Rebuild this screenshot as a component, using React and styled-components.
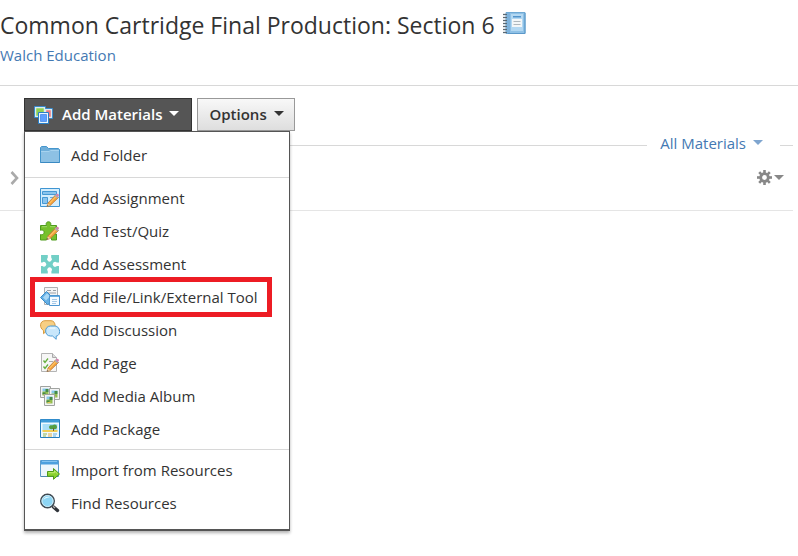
import React, { useState } from "react";
import styled, { createGlobalStyle } from "styled-components";

const GlobalStyle = createGlobalStyle`
    * {
        box-sizing: border-box;
    }
    body {
        min-height: 100vh;
        margin: 0;
        background-color: #ffffff;
        color: #333333;
        font-family: "Open Sans", sans-serif;
        font-size: 15px;
    }
    button {
        font-family: inherit;
        cursor: pointer;
    }
`;

const Header = styled.header`
    padding: 8px 0 19px;
    border-bottom: 1px solid #d8d8d8;
`;

const Title = styled.h1`
    display: flex;
    align-items: center;
    gap: 8px;
    margin: 0;
    font-size: 23px;
    font-weight: 400;
    line-height: 34px;
    white-space: nowrap;

    svg {
        margin-bottom: 4px;
    }
`;

const SchoolLink = styled.a`
    display: block;
    width: fit-content;
    margin-top: 2px;
    color: #4479b3;
    line-height: 22px;
    text-decoration: none;
`;

const Toolbar = styled.div`
    display: flex;
    gap: 5px;
    padding: 12px 24px 0;
`;

const Dropdown = styled.div`
    position: relative;
`;

const ToolbarButton = styled.button`
    display: flex;
    align-items: center;
    height: 33px;
    padding: ${(props) => (props.$dark ? "0 12px 2px 9px" : "0 10px 2px 11px")};
    border: 1px solid ${(props) => (props.$dark ? "#333333" : "#999999")};
    background: ${(props) =>
        props.$dark ? "#555555" : "linear-gradient(#f8f8f8, #dedede)"};
    color: ${(props) => (props.$dark ? "#ffffff" : "#333333")};
    font-size: 15px;
    font-weight: 600;
    white-space: nowrap;

    svg {
        margin: 2px 8px 0 0;
    }
`;

const Caret = styled.span`
    margin-left: 7px;
    border-top: 5px solid currentColor;
    border-right: 5px solid transparent;
    border-left: 5px solid transparent;
`;

const Menu = styled.div`
    position: absolute;
    top: 100%;
    left: 0;
    z-index: 1;
    width: 266px;
    padding: 3px 0 5px;
    border: 1px solid #555555;
    border-bottom-width: 2px;
    background-color: #ffffff;
    box-shadow: 0 2px 3px rgba(0, 0, 0, 0.3);
`;

const MenuGroup = styled.ul`
    margin: 0;
    padding: 4px 0;
    list-style: none;

    &:first-child {
        padding-bottom: 5px;
    }
    &:nth-child(2) {
        padding-bottom: 3px;
    }
    & + & {
        border-top: 1px solid #d8d8d8;
    }
`;

const MenuItem = styled.li`
    position: relative;

    &::after {
        content: "";
        display: ${(props) => (props.$marked ? "block" : "none")};
        position: absolute;
        inset: -4px 17px -3px 5px;
        border: 5px solid #ed1c24;
        pointer-events: none;
    }
`;

const MenuButton = styled.button`
    display: flex;
    align-items: center;
    gap: 11px;
    width: 100%;
    height: 33px;
    padding: 0 15px 1px;
    border: 0;
    background-color: transparent;
    color: #333333;
    font-size: 15px;
    white-space: nowrap;
`;

const FilterBar = styled.div`
    display: flex;
    align-items: center;
    gap: 13px;
    height: 28px;
    padding: 0 5px 0 24px;
`;

const Line = styled.div`
    flex: ${(props) => (props.$short ? "0 0 13px" : "1")};
    height: 1px;
    background-color: #d8d8d8;
`;

const FilterButton = styled.button`
    display: flex;
    align-items: center;
    padding: 0 4px 4px 0;
    border: 0;
    background-color: transparent;
    color: #4479b3;
    font-size: 15px;

    ${Caret} {
        margin-bottom: 2px;
        color: #7fa5cf;
    }
`;

const MaterialRow = styled.div`
    display: flex;
    align-items: flex-start;
    justify-content: space-between;
    margin-right: 5px;
    padding: 11px 9px 25px 10px;
    border-bottom: 1px solid #e5e5e5;
`;

const IconButton = styled.button`
    display: flex;
    align-items: center;
    height: 15px;
    padding: 0;
    border: 0;
    background-color: transparent;
    color: #888888;

    ${Caret} {
        margin-left: 2px;
    }
`;

const Svg = ({ children }) => (
    <svg width="20" height="20" viewBox="0 0 20 20" fill="none" aria-hidden="true">
        {children}
    </svg>
);

const Pencil = () => (
    <g>
        <path d="M8 15 15.5 7l3 2.5-8.3 8L7 18.6z" fill="#f6a43c" stroke="#b9763a" strokeWidth=".8" />
        <path d="m9.5 15.2 6.5-6.8" stroke="#ffd27a" strokeWidth="1" />
        <path d="m7.8 15.4 2.7 1.8L7 18.6z" fill="#efd3a6" />
        <path d="m7.5 17 1 1-1.6.6z" fill="#444" />
        <path d="m14.6 7.8 1.2-1.2 2.8 2.4-1.4 1.3z" fill="#a9adb5" />
        <path d="m15.8 6.6 1-.8c1-.7 2.8.9 2 2l-1 1.2z" fill="#d67fae" />
    </g>
);

const NotebookIcon = () => (
    <svg width="23" height="23" viewBox="0 0 23 23" fill="none" aria-hidden="true">
        <path d="M3 .5h19v21H3z" fill="#8fc1e6" stroke="#6fa9d4" />
        <path d="M4 1h3v20H4z" fill="#7db2dc" />
        <path d="M22 1v20.5H5" stroke="#5b98c9" />
        <path d="M8 2h12v17H8z" fill="#b3d8f2" />
        <path d="M10 4h8v1.5h-8z" fill="#5294cb" />
        <path d="M9 7h10v8H9z" fill="#f4f7f8" />
        <path d="M10.5 9.5h7M10.5 12.5h7" stroke="#b0b8bd" />
        {[2, 5, 8, 11, 14, 17, 20].map((y) => (
            <path key={y} d={`M0 ${y}.5h4`} stroke="#596873" strokeWidth="1.3" />
        ))}
    </svg>
);

const MaterialsIcon = () => (
    <Svg>
        <path d="M1.5 2.5h9v9h-9z" fill="#8ed052" stroke="#d9edf3" strokeWidth="1.5" />
        <path d="M.5 1.5h11v11H.5z" stroke="#3a8acb" />
        <path d="M11.5 4.5h6v8h-6z" fill="#ed777e" stroke="#ddecf3" strokeWidth="1.5" />
        <path d="M11.5 3.5h7v10h-2" stroke="#3a8acb" />
        <path d="M4.5 7.5h10v11h-10z" fill="#eaf6fc" stroke="#287fc9" />
        <path d="M6.5 9.5h6v7h-6z" fill="#5d9fff" stroke="#5a97ec" />
    </Svg>
);

const FolderIcon = () => (
    <Svg>
        <path d="M.5 17.5v-15l1-1h5l2 2h10l1 1v13z" fill="#6faed9" stroke="#4596cd" />
        <path d="M1 6.5h8l2-1h8v12H1z" fill="#8dc1e4" />
        <path d="M1 6.5h8l1.5-1H19" stroke="#a7d3ef" />
        <path d="M.5 17.5h19" stroke="#3a89c2" />
    </Svg>
);

const AssignmentIcon = () => (
    <Svg>
        <path d="M.5.5h19v18H.5z" fill="#d5edfc" stroke="#3f95d2" />
        <path d="M2.5 3.5h14v3h-14z" fill="#8bc4ed" stroke="#4799d4" />
        <path d="M2.5 9.5h5v6h-5z" fill="#8bc4ed" stroke="#4799d4" />
        <path d="M10 9.5h5" stroke="#69aede" />
        <Pencil />
    </Svg>
);

const QuizIcon = () => (
    <Svg>
        <path
            d="M.5 4.5h6C4.4-.5 12.6-.5 10.5 4.5h6v4.3c-4.6-1-4.6 5 0 4.2v6h-5c.8-3.5-5.2-4-5 0h-6v-5.5c4.5 1.5 5-5.8 0-4.2z"
            fill="#76c12c"
            stroke="#4e9b1d"
        />
        <path d="M2 5.7h5M10 5.7h5" stroke="#a0d968" />
        <Pencil />
    </Svg>
);

const AssessmentIcon = () => (
    <Svg>
        <path
            d="M1 1h6.8v2.4a2.4 2.4 0 1 0 3.4 0V1H19v7.6h-2.2a2.4 2.4 0 1 0 0 3.4H19v7.5h-7.6v-2.2a2.4 2.4 0 1 0-3.6 0v2.2H1V12h1.4a2.3 2.3 0 1 0 0-3.4H1z"
            fill="#72cfc6"
        />
    </Svg>
);

const FileLinkIcon = () => (
    <Svg>
        <path d="M4.5.5h13v17h-13z" fill="#f5f5f5" stroke="#adb0b3" />
        <path d="M7 3.5h4M13 3.5h3M7 6h9" stroke="#9aa0a6" />
        <path d="M.5 10.5 6.5 4.5l5 5v6l-4 2z" fill="#65afe4" stroke="#388cca" />
        <path d="m3 10.5 4-4.2 3 3-4 4.3z" fill="#a9d8f5" />
        <path d="M9.5 8.5h10v10h-10z" fill="#f6fbff" stroke="#4d96d1" />
        <path d="M10 9.5h9" stroke="#69aee1" strokeWidth="1" />
        <path d="M12 12.5h5M12 14.5h5M12 16.5h4" stroke="#a5c8e6" />
    </Svg>
);

const DiscussionIcon = () => (
    <Svg>
        <path
            d="M5 .7h6c5.5 0 5.5 10 0 10H7l-3.5 3v-3.2C-.8 8-.5.7 5 .7z"
            fill="#f7cf83"
            stroke="#d99b3f"
        />
        <path
            d="M10.5 6h4c6.5 0 6.5 10 1.7 10v3.3L12.5 16h-2c-6.5 0-6.5-10 0-10z"
            fill="#c8e7fb"
            stroke="#4c9bd4"
        />
        <path d="M9.5 8.2h6" stroke="#e4f5ff" strokeWidth="2" />
    </Svg>
);

const PageIcon = () => (
    <Svg>
        <path d="M1.5.5h11l4 4v14h-15z" fill="#f6f6f6" stroke="#b4b4b4" />
        <path d="M12.5.5v4h4" fill="#ddd" stroke="#aaa" />
        <path d="m3.5 7.5 1.5 2 3-4M3.5 13.5l1.5 2 3-4" stroke="#65ae3c" strokeWidth="1.3" />
        <path d="M9 8.5h4" stroke="#aaa" />
        <Pencil />
    </Svg>
);

const AlbumIcon = () => (
    <Svg>
        {[
            [0.5, 0.5],
            [9.5, 2.5],
            [4.5, 8.5],
        ].map(([x, y]) => (
            <g key={x} transform={`translate(${x} ${y})`}>
                <path d="M0 0h10v11H0z" fill="#f4f4f4" stroke="#a0a3a0" />
                <path d="M2 2h6v3H2z" fill="#86c9ed" />
                <path d="M2 5h6v4H2z" fill="#91bd50" />
                <path d="M5 2.5h3v3H5zM2 6h3v2H2z" fill="#468b44" />
                <path d="M3 8h3" stroke="#e6c75b" />
            </g>
        ))}
    </Svg>
);

const PackageIcon = () => (
    <Svg>
        <path d="M.5.5h19v18H.5z" fill="#eef9ff" stroke="#277fbd" />
        <path d="M1 2h18" stroke="#3d9bd8" strokeWidth="3" />
        <path d="M2.5 5h15v7h-15z" fill="#a9def7" />
        <path d="M2.5 11h15v2h-15z" fill="#f1cf55" />
        <path d="M9 8c1-3 3-1 4-2s4-1 4 2-3 2-4 2-4 1-4-2z" fill="#539e43" />
        <path d="M13.5 9v3" stroke="#745c32" />
        <path d="M3 15h4M3 17h3" stroke="#92b851" strokeWidth="1.2" />
        <path d="M8 15h4M8 17h4" stroke="#e3ad43" strokeWidth="1.2" />
        <path d="M13 15h4M13 17h3" stroke="#69afd9" strokeWidth="1.2" />
    </Svg>
);

const ImportIcon = () => (
    <Svg>
        <path d="M.5.5h18v16H.5z" fill="#edf6fc" stroke="#5d9bcc" />
        <path d="M1 2.5h17" stroke="#4c9fde" strokeWidth="4" />
        <path d="M2 1.5h15" stroke="#84c3f1" />
        <path d="M1 16.5h17" stroke="#5087b0" />
        <path d="M7.5 11.5h6v-3l6 5.5-6 5.3v-3h-6z" fill="#8bd22f" stroke="#4e9a17" />
        <path d="M8.5 12.7h6V11l3 2.8" stroke="#c3ed72" />
    </Svg>
);

const SearchIcon = () => (
    <Svg>
        <path d="m13.5 14 4 3.5" stroke="#30343a" strokeWidth="3.4" strokeLinecap="round" />
        <path d="m13 13.2 2 1.8" stroke="#aaa" strokeWidth="1.5" />
        <circle cx="7.5" cy="8" r="6.8" fill="#8dd5f4" stroke="#414951" strokeWidth="1.4" />
        <circle cx="7.5" cy="8" r="5.5" stroke="#ceeaf4" />
        <path d="M3.5 7c.5-3 4-4 6.5-2.8C8 4.6 5 5 3.5 7z" fill="#e6f9ff" />
    </Svg>
);

const GearIcon = () => (
    <svg width="15" height="15" viewBox="0 0 15 15" fill="none" aria-hidden="true">
        <circle cx="7.5" cy="7.5" r="3.8" stroke="#888888" strokeWidth="2.8" />
        {[0, 45, 90, 135, 180, 225, 270, 315].map((angle) => (
            <path
                key={angle}
                d="M6.2 0h2.6v3H6.2z"
                fill="#888888"
                transform={`rotate(${angle} 7.5 7.5)`}
            />
        ))}
    </svg>
);

const ChevronIcon = () => (
    <svg width="9" height="14" viewBox="0 0 9 14" fill="none" aria-hidden="true">
        <path d="m1.5 1 5.5 6-5.5 6" stroke="#aaaaaa" strokeWidth="2.6" />
    </svg>
);

const groups = [
    [{ label: "Add Folder", Icon: FolderIcon }],
    [
        { label: "Add Assignment", Icon: AssignmentIcon },
        { label: "Add Test/Quiz", Icon: QuizIcon },
        { label: "Add Assessment", Icon: AssessmentIcon },
        { label: "Add File/Link/External Tool", Icon: FileLinkIcon, marked: true },
        { label: "Add Discussion", Icon: DiscussionIcon },
        { label: "Add Page", Icon: PageIcon },
        { label: "Add Media Album", Icon: AlbumIcon },
        { label: "Add Package", Icon: PackageIcon },
    ],
    [
        { label: "Import from Resources", Icon: ImportIcon },
        { label: "Find Resources", Icon: SearchIcon },
    ],
];

const App = () => {
    const [open, setOpen] = useState(true);
    return (
        <React.Fragment>
            <GlobalStyle />
            <Header>
                <Title>
                    Common Cartridge Final Production: Section 6
                    <NotebookIcon />
                </Title>
                <SchoolLink href="#school">Walch Education</SchoolLink>
            </Header>
            <main>
                <Toolbar>
                    <Dropdown>
                        <ToolbarButton
                            $dark
                            aria-expanded={open}
                            onClick={() => setOpen(!open)}
                        >
                            <MaterialsIcon />
                            Add Materials
                            <Caret />
                        </ToolbarButton>
                        {open && (
                            <Menu>
                                {groups.map((items) => (
                                    <MenuGroup key={items[0].label}>
                                        {items.map(({ label, Icon, marked }) => (
                                            <MenuItem key={label} $marked={marked}>
                                                <MenuButton>
                                                    <Icon />
                                                    {label}
                                                </MenuButton>
                                            </MenuItem>
                                        ))}
                                    </MenuGroup>
                                ))}
                            </Menu>
                        )}
                    </Dropdown>
                    <ToolbarButton>
                        Options
                        <Caret />
                    </ToolbarButton>
                </Toolbar>
                <FilterBar>
                    <Line />
                    <FilterButton>
                        All Materials
                        <Caret />
                    </FilterButton>
                    <Line $short />
                </FilterBar>
                <MaterialRow>
                    <IconButton aria-label="Expand">
                        <ChevronIcon />
                    </IconButton>
                    <IconButton aria-label="Settings">
                        <GearIcon />
                        <Caret />
                    </IconButton>
                </MaterialRow>
            </main>
        </React.Fragment>
    );
};

export default App;
